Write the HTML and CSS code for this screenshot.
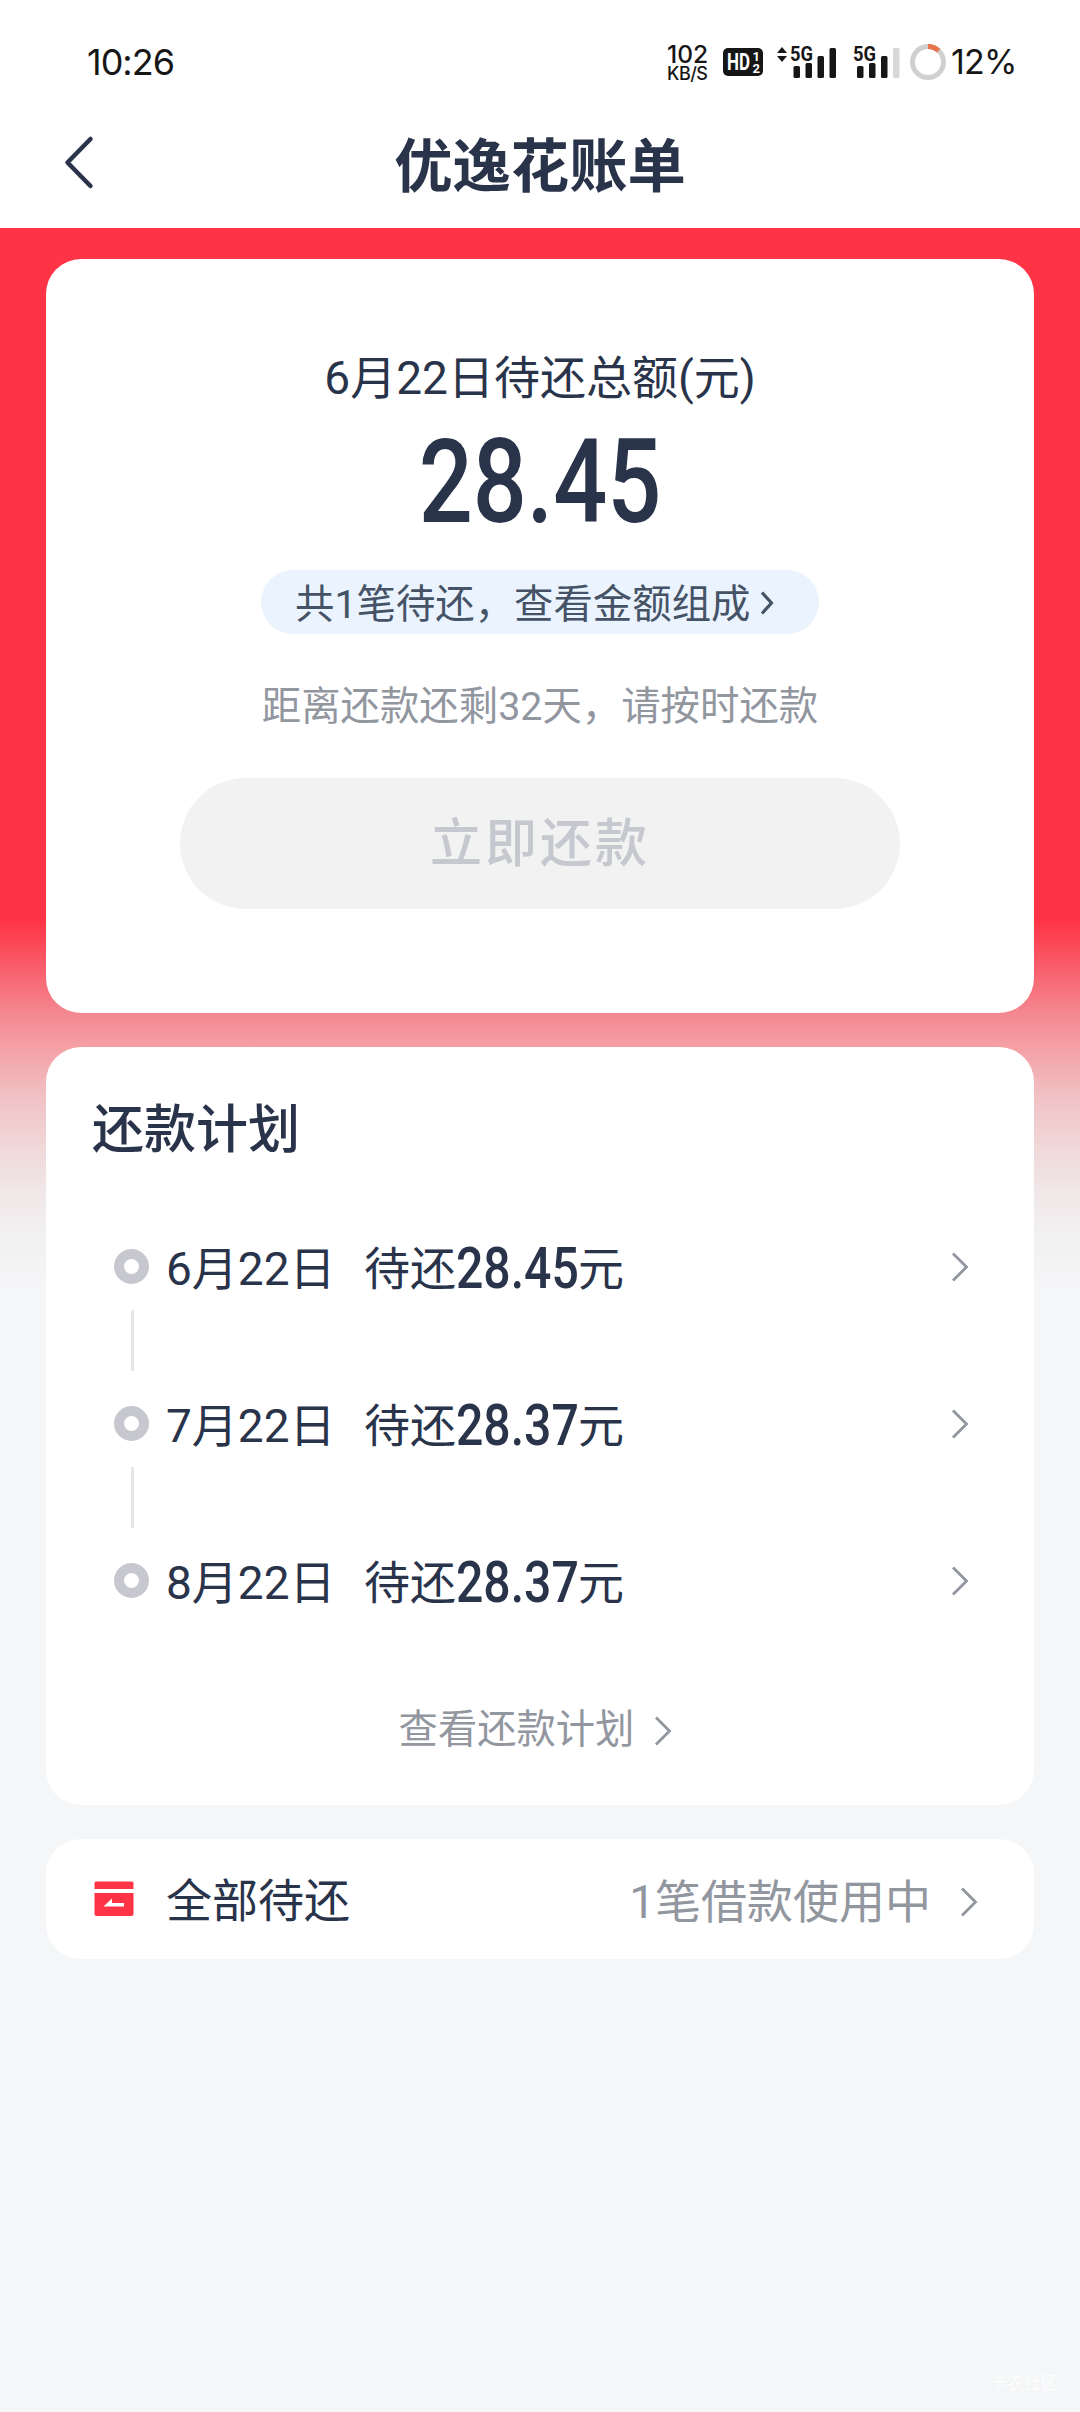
FILE: index.html
```html
<!DOCTYPE html>
<html lang="zh-CN">
<head>
<meta charset="utf-8">
<title>优逸花账单</title>
<link rel="stylesheet" href="styles.css">
</head>
<body>
<header class="top">
  <div class="status">
    <span class="clock">10:26</span>
    <div class="indicators">
      <span class="speed"><span>102</span><span class="unit">KB/S</span></span>
      <svg class="hd" width="40" height="28" viewBox="0 0 40 28"><rect width="40" height="28" rx="5" fill="#161616"/><text x="4" y="22" class="hd-text" textLength="23" lengthAdjust="spacingAndGlyphs">HD</text><text x="29.500" y="13" class="hd-sub">1</text><text x="29.500" y="25" class="hd-sub">2</text></svg>
      <svg class="sig1" width="60" height="34" viewBox="0 0 60 34"><path d="M0 8l5-6 5 6zM0 11h10l-5 6z" fill="#161616"/><text x="13" y="16" class="g5" textLength="23" lengthAdjust="spacingAndGlyphs">5G</text><g fill="#161616"><rect x="16.500" y="21" width="6.500" height="12" rx="1.500"/><rect x="28.500" y="18" width="6.500" height="15" rx="1.500"/><rect x="40.500" y="11" width="6.500" height="22" rx="1.500"/><rect x="52.500" y="3" width="6.500" height="30" rx="1.500"/></g></svg>
      <svg class="sig2" width="48" height="34" viewBox="0 0 48 34"><text x="0" y="16" class="g5" textLength="23" lengthAdjust="spacingAndGlyphs">5G</text><g fill="#161616"><rect x="4" y="21" width="6.500" height="12" rx="1.500"/><rect x="16" y="18" width="6.500" height="15" rx="1.500"/><rect x="28" y="11" width="6.500" height="22" rx="1.500"/></g><rect x="40" y="3" width="6.500" height="30" rx="1.500" fill="#d8d8d8"/></svg>
      <svg class="battery" width="36" height="36" viewBox="0 0 36 36" fill="none" stroke-width="5"><circle cx="18" cy="18" r="15.500" stroke="#d0d0d0"/><path d="M18 2.500A15.500 15.500 0 0 1 28.600 6.700" stroke="#e9744a"/></svg>
      <span class="percent">12%</span>
    </div>
  </div>
  <div class="nav">
    <svg class="back" width="32" height="56" viewBox="0 0 32 56"><path d="M28.500 3L5.500 26.500L28.500 50" class="back-line"/></svg>
    <h1>优逸花账单</h1>
  </div>
</header>
<main>
  <section class="card bill">
    <p class="label">6月22日待还总额(元)</p>
    <p class="total"><span>28.45</span></p>
    <a class="pill"><span>共1笔待还，查看金额组成</span><svg width="14" height="24" viewBox="0 0 14 24"><path d="M2 1.500L11.500 12L2 22.500"/></svg></a>
    <p class="hint">距离还款还剩32天，请按时还款</p>
    <button class="pay" disabled>立即还款</button>
  </section>
  <section class="card plan">
    <h2>还款计划</h2>
    <ul>
      <li><i class="dot"></i><span class="date">6月22日</span><span class="due">待还<b><span>28.45</span></b>元</span><svg class="arrow" width="18" height="30" viewBox="0 0 18 30"><path d="M2 1.500L15.500 15L2 28.500"/></svg></li>
      <li><i class="dot"></i><span class="date">7月22日</span><span class="due">待还<b><span>28.37</span></b>元</span><svg class="arrow" width="18" height="30" viewBox="0 0 18 30"><path d="M2 1.500L15.500 15L2 28.500"/></svg></li>
      <li><i class="dot"></i><span class="date">8月22日</span><span class="due">待还<b><span>28.37</span></b>元</span><svg class="arrow" width="18" height="30" viewBox="0 0 18 30"><path d="M2 1.500L15.500 15L2 28.500"/></svg></li>
    </ul>
    <a class="more"><span>查看还款计划</span><svg class="arrow" width="18" height="30" viewBox="0 0 18 30"><path d="M2 1.500L15.500 15L2 28.500"/></svg></a>
  </section>
  <section class="card all">
    <svg class="box" width="40" height="36" viewBox="0 0 40 36"><path fill="#fe3345" d="M2 0.500H38Q39.500 0.500 39.500 2V8H0.500V2Q0.500 0.500 2 0.500zM0.500 12H39.500V33Q39.500 35 37.500 35H2.500Q0.500 35 0.500 33z"/><path fill="#fff" d="M9.500 25.500L18 17.500V22H30V25.500z"/></svg>
    <span class="all-name">全部待还</span>
    <span class="using">1笔借款使用中</span>
    <svg class="arrow" width="18" height="30" viewBox="0 0 18 30"><path d="M2 1.500L15.500 15L2 28.500"/></svg>
  </section>
</main>
<div class="mark">卡农社区</div>
</body>
</html>
```
FILE: styles.css
```css
* { box-sizing: border-box; margin: 0; padding: 0; }
body {
  position: relative;
  width: 1080px;
  height: 2412px;
  overflow: hidden;
  background: #f5f6f8;
  color: #29334a;
  font-family: Roboto, "Noto Sans CJK SC", sans-serif;
}
svg { overflow: visible; flex-shrink: 0; }
.top { height: 228px; background: #fff; }
.status {
  height: 124px;
  padding: 0 64px 0 87px;
  display: flex;
  justify-content: space-between;
  align-items: center;
  color: #161616;
}
.clock { font: 36px/40px Inter, sans-serif; letter-spacing: -1px; }
.indicators { display: flex; align-items: center; }
.speed {
  width: 43px;
  margin-right: -1px;
  padding-top: 2px;
  display: flex;
  flex-direction: column;
  font: 500 24.500px/21px Inter, sans-serif;
}
.speed .unit { font-size: 18px; line-height: 18px; letter-spacing: -0.500px; }
.hd { margin-left: 14px; }
.hd-text { font: 700 23px Roboto, sans-serif; fill: #fff; }
.hd-sub { font: 700 13px Roboto, sans-serif; fill: #fff; }
.g5 { font: 700 21px Roboto, sans-serif; fill: #161616; }
.sig1 { margin-left: 14px; }
.sig2 { margin-left: 16px; }
.battery { margin-left: 9px; }
.percent { width: 65px; margin-left: 5px; font: 400 34px/40px Inter, sans-serif; letter-spacing: -0.800px; white-space: nowrap; }
.nav {
  height: 84px;
  padding: 0 62px;
  display: grid;
  grid-template-columns: 32px 1fr 32px;
  align-items: center;
}
.back { margin-top: -4px; }
h1 { padding-top: 2px; font-size: 58.300px; line-height: 80px; font-weight: 700; text-align: center; }
.back-line { fill: none; stroke: #29334a; stroke-width: 4.500; stroke-linecap: round; stroke-linejoin: round; }
main {
  padding: 31px 46px 0;
  height: 2184px;
  display: flex;
  flex-direction: column;
  gap: 34px;
  background: linear-gradient(#fe3345 0, #fe3345 692px, #f48790 785px, #f4a0a5 819px, #f0c2c5 870px, #f0d9da 922px, #f0e6e7 960px, #f2f0f1 1005px, #f5f6f8 1060px);
}
.card { background: #fff; border-radius: 35px; }
.bill { height: 754px; display: flex; flex-direction: column; align-items: center; }
.label { margin-top: 85px; font-size: 46px; line-height: 68px; }
.total { margin-top: 15px; font-size: 116px; line-height: 110px; font-weight: 500; }
.total span { display: inline-block; transform: scaleX(.82); }
.pill {
  width: 558px;
  height: 64px;
  margin-top: 33px;
  padding: 0 0 4px 34px;
  display: flex;
  align-items: center;
  gap: 10px;
  border-radius: 32px;
  background: #eaf3fe;
  color: #465367;
  font-size: 39.400px;
  white-space: nowrap;
}
.pill svg { margin-top: 6px; fill: none; stroke: #465367; stroke-width: 3.200; }
.hint { margin-top: 44px; font-size: 39.400px; line-height: 58px; color: #92969f; }
.pay {
  width: 720px;
  height: 131px;
  margin-top: 42px;
  padding-top: 2px;
  border: 0;
  border-radius: 66px;
  background: #f2f2f3;
  color: #c6c8cf;
  font: 500 52px/80px Roboto, "Noto Sans CJK SC", sans-serif;
  letter-spacing: 3px;
}
.plan { height: 758px; padding: 44px 60px 0 46px; }
h2 { font-size: 52px; line-height: 80px; font-weight: 500; }
ul { margin-top: 17px; list-style: none; }
li {
  position: relative;
  height: 157px;
  padding: 0 5px 0 22px;
  display: flex;
  align-items: center;
  font-size: 46px;
}
li:not(:last-child)::after {
  content: "";
  position: absolute;
  left: 39px;
  top: 122px;
  width: 3px;
  height: 61px;
  background: #e6e6e8;
}
.dot { width: 35px; height: 35px; border: 10.500px solid #c6c7cf; border-radius: 50%; }
.date { width: 198px; margin-left: 17px; padding-bottom: 3px; }
.due { display: flex; align-items: center; padding-bottom: 3px; }
.due b { width: 122px; padding-top: 6px; font-size: 58px; line-height: 60px; font-weight: 500; }
.due b span { display: inline-block; transform: scaleX(.83); transform-origin: left; }
.arrow { fill: none; stroke: #92969f; stroke-width: 2.800; }
li .arrow { margin-left: auto; }
.more {
  margin-top: 43px;
  padding-left: 5px;
  display: flex;
  justify-content: center;
  align-items: center;
  gap: 20px;
  font-size: 39.300px;
  line-height: 60px;
  color: #92969f;
}
.more span { margin-top: -2px; }
.all {
  height: 120px;
  padding: 0 56px 0 48px;
  display: flex;
  align-items: center;
  font-size: 46px;
}
.all .arrow { margin-top: 5px; }
.all-name { margin-left: 32px; padding-bottom: 4px; }
.using { margin-left: auto; margin-right: 29px; padding-bottom: 2px; color: #92969f; }
.mark { position: absolute; right: 22px; bottom: 17px; font-size: 17px; line-height: 24px; color: #fcfdfd; }
```
